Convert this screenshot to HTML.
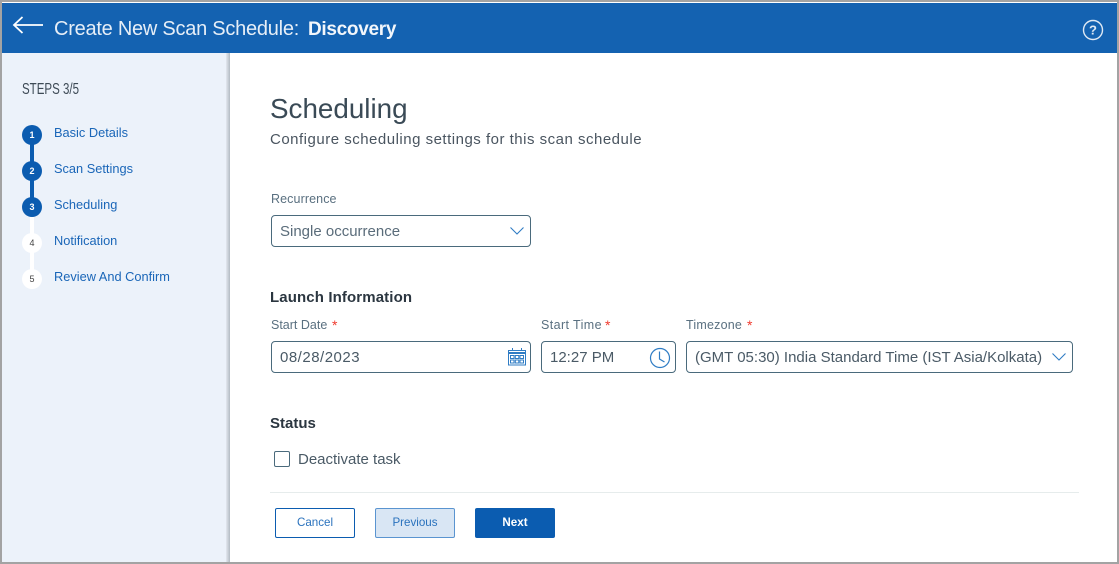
<!DOCTYPE html>
<html><head><meta charset="utf-8">
<style>
html,body{margin:0;padding:0;background:#fff}
#p{position:relative;width:1119px;height:564px;overflow:hidden;background:#fff;font-family:"Liberation Sans",sans-serif}
#p div{position:absolute;white-space:nowrap}
.lab{font-size:12.5px;color:#5a7080;line-height:16px}
.req{position:absolute;top:0;color:#f03a2e;font-size:14px}
.box{border:1px solid #4a6a7c;border-radius:4px;background:#fff;box-sizing:border-box;height:32px}
.val{font-size:15px;color:#4a5a66;line-height:18px}
.step{font-size:12.8px;color:#1a66b8;line-height:16px}
.c{width:20px;height:20px;border-radius:50%;left:22px;text-align:center;line-height:20px;font-size:9px}
.on{background:#0b5cb0;color:#fff;font-weight:bold}
.off{background:#fff;color:#444}
.h{font-size:15px;font-weight:bold;color:#2b3640;line-height:18px}
.btn{top:508px;width:80px;height:30px;box-sizing:border-box;border-radius:2px;text-align:center;line-height:28px;font-size:11.6px}
</style></head><body>
<div id="p">
<div style="left:2px;top:53px;width:226px;height:509px;background:#ecf2fa"></div>
<div style="left:226px;top:53px;width:4px;height:509px;background:linear-gradient(90deg,#e3e8ef,#b3bbc3)"></div>
<div style="left:2px;top:3px;width:1115px;height:50px;background:#1462b1"></div>
<div style="left:0;top:0;width:1119px;height:2px;background:#a3a3a3"></div>
<div style="left:0;top:0;width:2px;height:564px;background:#a3a3a3"></div>
<div style="left:1117px;top:0;width:2px;height:564px;background:#a3a3a3"></div>
<div style="left:0;top:562px;width:1119px;height:2px;background:#a3a3a3"></div>

<svg style="position:absolute;left:12px;top:14px" width="32" height="22" viewBox="0 0 32 22" fill="none" stroke="#fff" stroke-width="1.8"><path d="M31 11H2M10.500 3L2 11l8.500 8"/></svg>
<div style="left:54px;top:17px;font-size:20px;line-height:24px;color:#e6eef7;letter-spacing:-.25px">Create New Scan Schedule:</div>
<div style="left:308px;top:18px;font-size:19px;line-height:24px;color:#f2f6fb;font-weight:bold;letter-spacing:-.3px">Discovery</div>
<svg style="position:absolute;left:1082px;top:19px" width="22" height="22" viewBox="0 0 22 22" fill="none"><circle cx="11" cy="11" r="9.500" stroke="#dfe9f4" stroke-width="1.400"/><text x="11" y="15.500" text-anchor="middle" font-family="Liberation Sans" font-size="13" font-weight="bold" fill="#dfe9f4">?</text></svg>

<div style="left:22px;top:81px;font-size:16px;line-height:18px;color:#3d4a55;transform:scaleX(.72);transform-origin:left">STEPS 3/5</div>
<div style="left:30px;top:135px;width:4px;height:70px;background:#0b5cb0"></div>
<div style="left:30px;top:205px;width:4px;height:70px;background:#fff"></div>
<div class="c on" style="top:125px">1</div>
<div class="c on" style="top:161px">2</div>
<div class="c on" style="top:197px">3</div>
<div class="c off" style="top:233px">4</div>
<div class="c off" style="top:269px">5</div>
<div class="step" style="left:54px;top:125px">Basic Details</div>
<div class="step" style="left:54px;top:161px">Scan Settings</div>
<div class="step" style="left:54px;top:197px">Scheduling</div>
<div class="step" style="left:54px;top:233px">Notification</div>
<div class="step" style="left:54px;top:269px">Review And Confirm</div>

<div style="left:270px;top:93px;font-size:27.8px;line-height:32px;color:#3a4a56">Scheduling</div>
<div style="left:270px;top:131px;font-size:15px;line-height:18px;color:#4a5560;letter-spacing:.5px">Configure scheduling settings for this scan schedule</div>

<div class="lab" style="left:271px;top:191px;letter-spacing:.1px">Recurrence</div>
<div class="box" style="left:271px;top:215px;width:260px"></div>
<div class="val" style="left:280px;top:223px;color:#5a6c7a">Single occurrence</div>
<svg style="position:absolute;left:509px;top:225px" width="16" height="12" viewBox="0 0 16 12" fill="none" stroke="#2f7cc4" stroke-width="1.100"><path d="M1.500 2.500L8 9l6.500-6.500"/></svg>

<div class="h" style="left:270px;top:289px;letter-spacing:.12px">Launch Information</div>
<div class="lab" style="left:271px;top:317px;width:80px">Start Date<span class="req" style="left:61px">*</span></div>
<div class="box" style="left:271px;top:341px;width:260px"></div>
<div class="val" style="left:280px;top:349px;letter-spacing:.5px">08/28/2023</div>
<svg style="position:absolute;left:507px;top:347px" width="20" height="20" viewBox="0 0 20 20" fill="none" stroke="#2f7cc4"><rect x="1.500" y="3.500" width="17" height="14.500" stroke-width="1"/><path d="M1.500 6h17" stroke-width="2"/><path d="M5.500 1v3M14.500 1v3" stroke-width="1"/><path d="M3.500 8.500h3.500v3h-3.500zM8.300 8.500h3.500v3h-3.500zM13 8.500h3.500v3h-3.500zM3.500 13h3.500v3h-3.500zM8.300 13h3.500v3h-3.500zM13 13h3.500v3h-3.500z" stroke-width="1"/></svg>

<div class="lab" style="left:541px;top:317px;width:80px;letter-spacing:.4px">Start Time<span class="req" style="left:64px">*</span></div>
<div class="box" style="left:541px;top:341px;width:135px"></div>
<div class="val" style="left:550px;top:349px">12:27 PM</div>
<svg style="position:absolute;left:649px;top:347px" width="22" height="22" viewBox="0 0 22 22" fill="none" stroke="#2f7cc4" stroke-width="1.200"><circle cx="11" cy="11" r="9.500"/><path d="M10.500 4.500V12l5 3"/></svg>

<div class="lab" style="left:686px;top:317px;width:80px;letter-spacing:.2px">Timezone<span class="req" style="left:61px">*</span></div>
<div class="box" style="left:686px;top:341px;width:387px"></div>
<div class="val" style="left:695px;top:349px">(GMT 05:30) India Standard Time (IST Asia/Kolkata)</div>
<svg style="position:absolute;left:1051px;top:351px" width="16" height="12" viewBox="0 0 16 12" fill="none" stroke="#2f7cc4" stroke-width="1.100"><path d="M1.500 2.500L8 9l6.500-6.500"/></svg>

<div class="h" style="left:270px;top:415px">Status</div>
<div style="left:274px;top:451px;width:16px;height:16px;box-sizing:border-box;border:1px solid #4a6a7c;border-radius:2px;background:#fff"></div>
<div class="val" style="left:298px;top:451px">Deactivate task</div>
<div style="left:270px;top:492px;width:809px;height:1px;background:#e6ecec"></div>

<div class="btn" style="left:275px;border:1px solid #0b5cb0;background:#fff;color:#2a72bd">Cancel</div>
<div class="btn" style="left:375px;border:1px solid #5a94d0;background:#d9e6f4;color:#2a72bd">Previous</div>
<div class="btn" style="left:475px;background:#0b5cb0;color:#fff;font-weight:bold;line-height:30px">Next</div>
</div>
</body></html>
